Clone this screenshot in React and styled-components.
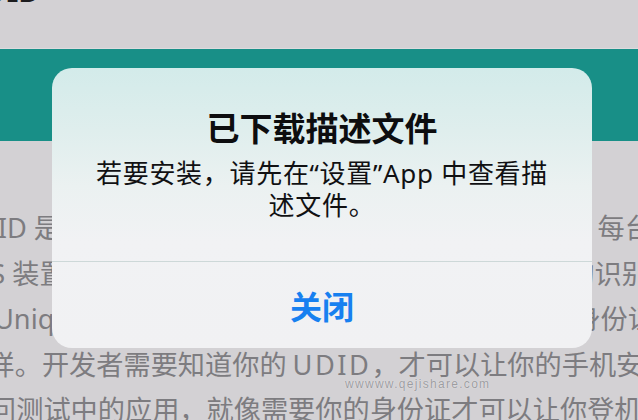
import React from 'react';
import styled, { createGlobalStyle } from 'styled-components';

const GlobalStyle = createGlobalStyle`
  html, body {
    margin: 0;
    padding: 0;
    background: #d3d1d4;
  }
  body {
    font-family: 'Noto Sans', 'Noto Sans CJK SC', sans-serif;
  }
`;

const Page = styled.div`
  position: relative;
  width: 638px;
  height: 420px;
  overflow: hidden;
  background: #d3d1d4;
`;

const Header = styled.header`
  height: 48px;
  overflow: hidden;
  border-bottom: 1px solid #dddbde;
`;

const HeaderTitle = styled.h1`
  margin: -29px 0 0 -38px;
  font-size: 30px;
  line-height: 40px;
  font-weight: 700;
  color: #1c1c1e;
`;

const Banner = styled.div`
  height: 92px;
  background: #188f87;
`;

const Article = styled.article`
  padding-top: 64px;
  color: #7d7c80;
  font-size: 27.2px;
  line-height: 45.5px;
`;

const Line = styled.p`
  display: flex;
  justify-content: space-between;
  margin: 0;
  white-space: nowrap;
  overflow: hidden;

  & > span {
    flex-shrink: 0;
  }
  & > span:first-child {
    margin-left: ${({ $lead }) => $lead || 0}px;
  }
  & > span:last-child:not(:first-child) {
    margin-right: ${({ $tail }) => $tail || 0}px;
  }
`;

const Term = styled.span`
  margin-left: 6px;
  letter-spacing: 2.5px;
`;

const Watermark = styled.div`
  position: absolute;
  left: 345px;
  top: 377px;
  font-family: 'Liberation Sans', sans-serif;
  font-size: 12px;
  letter-spacing: 1.3px;
  color: rgba(130, 130, 134, 0.75);
  text-shadow: 0 0 1px #f4f4f6;
`;

const Backdrop = styled.div`
  position: absolute;
  inset: 0;
  display: flex;
  justify-content: center;
  align-items: flex-start;
  padding: 68px 0 0 6px;
`;

const Alert = styled.div`
  width: 540px;
  border-radius: 20px;
  overflow: hidden;
  background: linear-gradient(
    180deg,
    #d3ebea 0%,
    #dfeeed 22%,
    #ebf1f1 42%,
    #f1f2f4 62%,
    #f1f1f3 100%
  );
  text-align: center;
`;

const AlertBody = styled.div`
  padding: 44px 38px 40px;
  border-bottom: 1px solid #cdd8d8;
`;

const AlertTitle = styled.h2`
  margin: 0 0 11px;
  font-size: 33px;
  line-height: 34px;
  font-weight: 700;
  color: #0d0d0f;
`;

const AlertMessage = styled.p`
  margin: 0;
  font-size: 26px;
  line-height: 32px;
  letter-spacing: 0.7px;
  color: #111113;
`;

const AlertButton = styled.button`
  display: block;
  width: 100%;
  height: 86px;
  padding: 0;
  border: 0;
  background: transparent;
  font-family: inherit;
  font-size: 32px;
  font-weight: 600;
  color: #1780f0;
  cursor: pointer;
`;

export default function App() {
  return (
    <Page>
      <GlobalStyle />
      <Header>
        <HeaderTitle>UDID</HeaderTitle>
      </Header>
      <Banner />
      <Article>
        <Line $lead={-42} $tail={-14}>
          <span>UDID 是一种 iOS 设备的特殊识别码</span>
          <span>每台</span>
        </Line>
        <Line $lead={-38} $tail={-11}>
          <span>iOS 装置都有一个独一无二的识别码</span>
          <span>的识别</span>
        </Line>
        <Line $lead={-6} $tail={-17}>
          <span>Unique Device Identifier</span>
          <span>的身份证</span>
        </Line>
        <Line $lead={-12.5}>
          <span>
            样。开发者需要知道你的<Term>UDID</Term>，才可以让你的手机安装
          </span>
        </Line>
        <Line $lead={-11}>
          <span>问测试中的应用，就像需要你的身份证才可以让你登机</span>
        </Line>
      </Article>
      <Watermark>wwwww.qejishare.com</Watermark>
      <Backdrop>
        <Alert role="alertdialog">
          <AlertBody>
            <AlertTitle>已下载描述文件</AlertTitle>
            <AlertMessage>若要安装，请先在“设置”App 中查看描述文件。</AlertMessage>
          </AlertBody>
          <AlertButton>关闭</AlertButton>
        </Alert>
      </Backdrop>
    </Page>
  );
}
